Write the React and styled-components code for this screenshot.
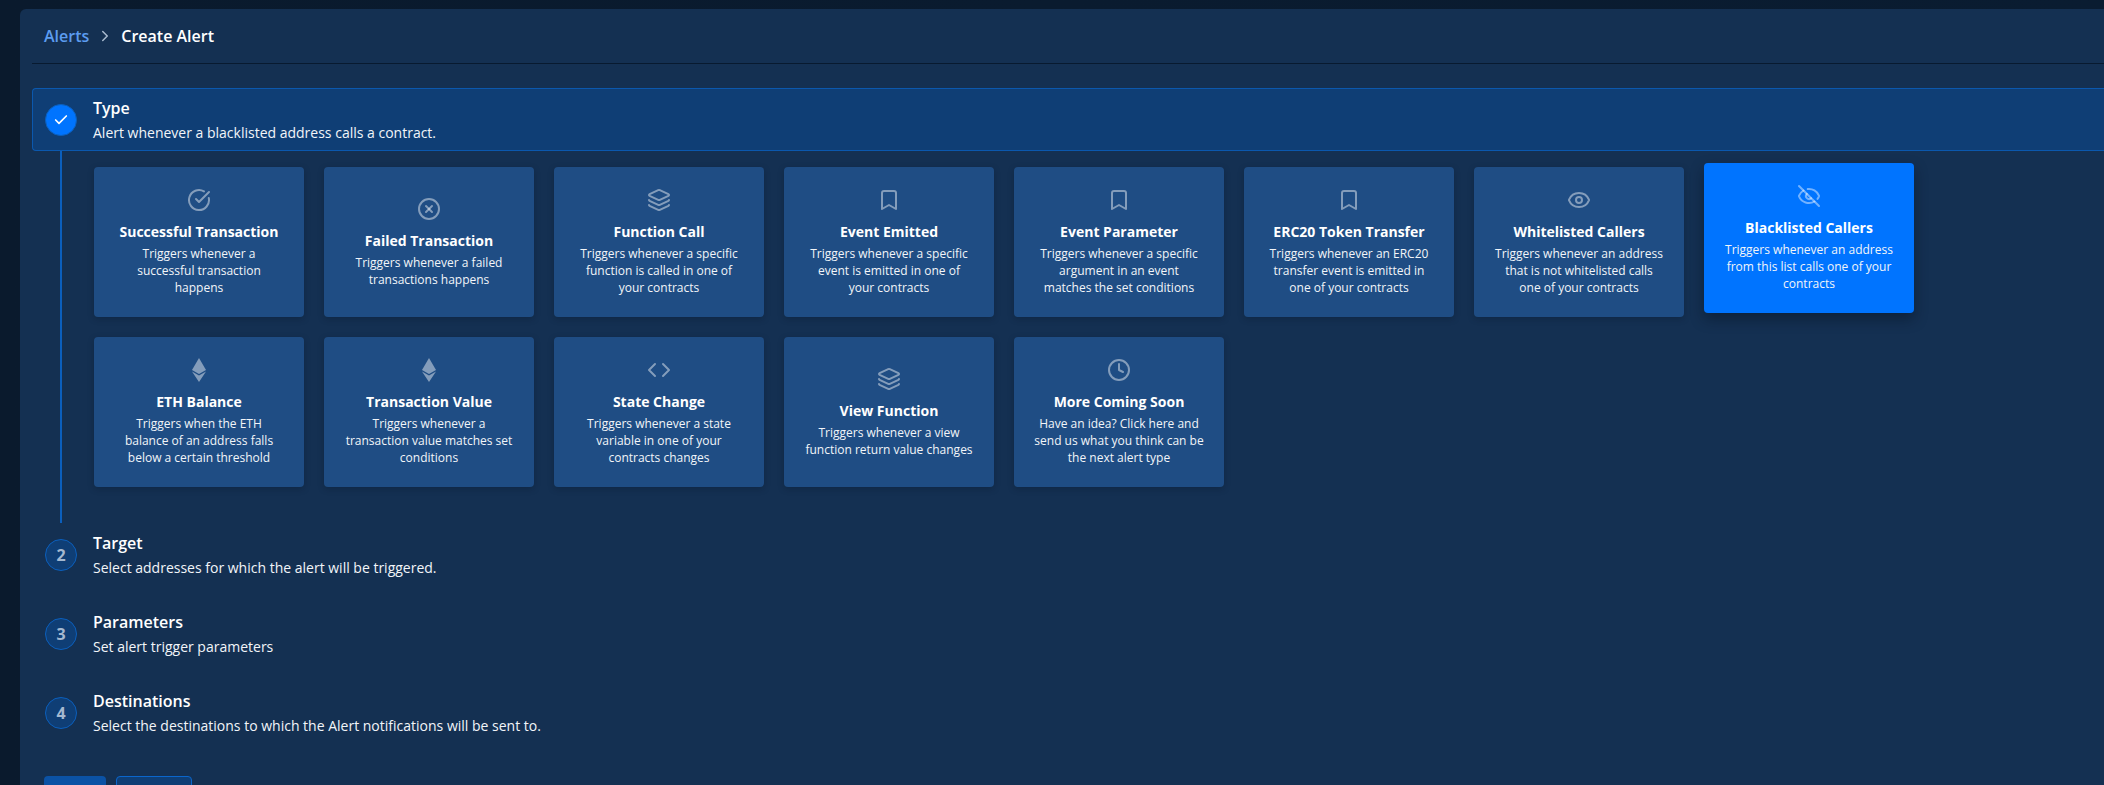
import React from 'react'
import styled, { createGlobalStyle } from 'styled-components'
import { Bookmark, Check, ChevronRight, CircleCheckBig, CircleX, Clock, Code, Eye, EyeOff, Layers } from 'lucide-react'

const EthIcon = () => (
  <svg width={14} height={24} viewBox="0 0 14 24" fill="currentColor">
    <path d="M7 0 L14 12 L7 16 L0 12 Z" />
    <path d="M0 13.6 L7 17.6 L14 13.6 L7 24 Z" />
  </svg>
)

const alertTypes = [
  { icon: CircleCheckBig, title: 'Successful Transaction', text: 'Triggers whenever a successful transaction happens' },
  { icon: CircleX, title: 'Failed Transaction', text: 'Triggers whenever a failed transactions happens' },
  { icon: Layers, title: 'Function Call', text: 'Triggers whenever a specific function is called in one of your contracts' },
  { icon: Bookmark, title: 'Event Emitted', text: 'Triggers whenever a specific event is emitted in one of your contracts' },
  { icon: Bookmark, title: 'Event Parameter', text: 'Triggers whenever a specific argument in an event matches the set conditions' },
  { icon: Bookmark, title: 'ERC20 Token Transfer', text: 'Triggers whenever an ERC20 transfer event is emitted in one of your contracts' },
  { icon: Eye, title: 'Whitelisted Callers', text: 'Triggers whenever an address that is not whitelisted calls one of your contracts' },
  { icon: EyeOff, title: 'Blacklisted Callers', text: 'Triggers whenever an address from this list calls one of your contracts', selected: true },
  { icon: EthIcon, title: 'ETH Balance', text: 'Triggers when the ETH balance of an address falls below a certain threshold' },
  { icon: EthIcon, title: 'Transaction Value', text: 'Triggers whenever a transaction value matches set conditions' },
  { icon: Code, title: 'State Change', text: 'Triggers whenever a state variable in one of your contracts changes' },
  { icon: Layers, title: 'View Function', text: 'Triggers whenever a view function return value changes' },
  { icon: Clock, title: 'More Coming Soon', text: 'Have an idea? Click here and send us what you think can be the next alert type' },
]

const pendingSteps = [
  { number: 2, title: 'Target', text: 'Select addresses for which the alert will be triggered.' },
  { number: 3, title: 'Parameters', text: 'Set alert trigger parameters' },
  { number: 4, title: 'Destinations', text: 'Select the destinations to which the Alert notifications will be sent to.' },
]

const App = () => {
  return (
    <Page>
      <GlobalStyle />
      <Panel>
        <Breadcrumbs>
          <CrumbLink>Alerts</CrumbLink>
          <ChevronRight size={18} color="#a9bbd0" strokeWidth={2} />
          <CrumbCurrent>Create Alert</CrumbCurrent>
        </Breadcrumbs>
        <Steps>
          <StepHeader $active>
            <StepCircle $done><Check size={16} strokeWidth={2.5} /></StepCircle>
            <StepText>
              <StepTitle>Type</StepTitle>
              <StepDescription>Alert whenever a blacklisted address calls a contract.</StepDescription>
            </StepText>
          </StepHeader>
          <StepBody>
            <CardGrid>
              {alertTypes.map(({ icon: Icon, title, text, selected }) => (
                <Card key={title} $selected={selected}>
                  <CardIcon><Icon size={24} strokeWidth={2} /></CardIcon>
                  <CardTitle>{title}</CardTitle>
                  <CardText>{text}</CardText>
                </Card>
              ))}
            </CardGrid>
          </StepBody>
          <PendingSteps>
            {pendingSteps.map(step => (
              <StepHeader key={step.number}>
                <StepCircle>{step.number}</StepCircle>
                <StepText>
                  <StepTitle>{step.title}</StepTitle>
                  <StepDescription>{step.text}</StepDescription>
                </StepText>
              </StepHeader>
            ))}
          </PendingSteps>
        </Steps>
        <Actions>
          <PrimaryButton aria-label="Back" />
          <OutlineButton aria-label="Next" />
        </Actions>
      </Panel>
    </Page>
  )
}

export default App

const GlobalStyle = createGlobalStyle`
  html, body {
    margin: 0;
    height: 100%;
    overflow: hidden;
    background: #0a1b2f;
  }
  * {
    box-sizing: border-box;
  }
`

const Page = styled.div`
  height: 785px;
  overflow: hidden;
  padding: 9px 0 0 20px;
  background: linear-gradient(90deg, #0a1a2d 0%, #0a1c31 100%);
  font-family: "Open Sans", "Noto Sans", sans-serif;
  color: #fff;
`

const Panel = styled.main`
  min-height: 900px;
  padding-left: 12px;
  background: #143052;
  border-radius: 6px 0 0 0;
`

const Breadcrumbs = styled.nav`
  height: 55px;
  display: flex;
  align-items: center;
  gap: 7px;
  padding: 0 0 1px 12px;
  border-bottom: 1px solid #081a30;
  font-size: 16px;
  font-weight: 600;
`

const CrumbLink = styled.span`
  color: #5c9cf0;
`

const CrumbCurrent = styled.span`
  color: #fff;
`

const Steps = styled.div`
  margin-top: 24px;
`

const PendingSteps = styled.div`
  display: flex;
  flex-direction: column;
  gap: 16px;
`

const StepHeader = styled.div`
  height: 63px;
  display: flex;
  align-items: center;
  gap: 16px;
  padding-left: 12px;
  border: 1px solid ${props => (props.$active ? '#0b58ae' : 'transparent')};
  border-right: 0;
  border-radius: 4px 0 0 4px;
  background: ${props => (props.$active ? '#0f3e75' : 'transparent')};
`

const StepCircle = styled.div`
  width: 32px;
  height: 32px;
  flex: none;
  display: flex;
  align-items: center;
  justify-content: center;
  border-radius: 50%;
  border: 1px solid #0b5fbd;
  background: ${props => (props.$done ? '#0074ff' : '#0f3e75')};
  color: ${props => (props.$done ? '#fff' : '#a4b8d0')};
  font-size: 16px;
  font-weight: 700;
`

const StepText = styled.div`
  display: flex;
  flex-direction: column;
  padding-top: 1px;
`

const StepTitle = styled.div`
  font-size: 16px;
  font-weight: 600;
  line-height: 24px;
`

const StepDescription = styled.div`
  margin-top: 1px;
  font-size: 14px;
  line-height: 24px;
  color: #f2f5f9;
`

const StepBody = styled.div`
  margin-left: 28px;
  padding: 16px 0 36px 32px;
  border-left: 2px solid #0b5fbd;
`

const CardGrid = styled.div`
  display: grid;
  grid-template-columns: repeat(8, 210px);
  grid-auto-rows: 150px;
  gap: 20px;
`

const Card = styled.div`
  display: flex;
  flex-direction: column;
  align-items: center;
  justify-content: center;
  padding: 0 20px;
  border-radius: 4px;
  text-align: center;
  background: ${props => (props.$selected ? '#0074ff' : '#1f4d84')};
  box-shadow: ${props => (props.$selected ? '0 6px 14px rgba(5, 15, 30, 0.45)' : '0 2px 6px rgba(5, 15, 30, 0.25)')};
  transform: ${props => (props.$selected ? 'translateY(-4px)' : 'none')};
`

const CardIcon = styled.div`
  height: 24px;
  display: flex;
  align-items: center;
  color: rgba(255, 255, 255, 0.45);
`

const CardTitle = styled.div`
  margin-top: 10px;
  font-size: 14px;
  font-weight: 700;
  line-height: 20px;
`

const CardText = styled.div`
  margin-top: 3px;
  font-size: 12px;
  line-height: 17px;
  color: #f2f5f9;
`

const Actions = styled.div`
  display: flex;
  gap: 10px;
  margin: 32px 0 0 12px;
`

const PrimaryButton = styled.button`
  width: 62px;
  height: 40px;
  border: 0;
  border-radius: 4px;
  background: #0b52a5;
`

const OutlineButton = styled.button`
  width: 76px;
  height: 40px;
  border: 1px solid #0b66cc;
  border-radius: 4px;
  background: #0f3e75;
`
